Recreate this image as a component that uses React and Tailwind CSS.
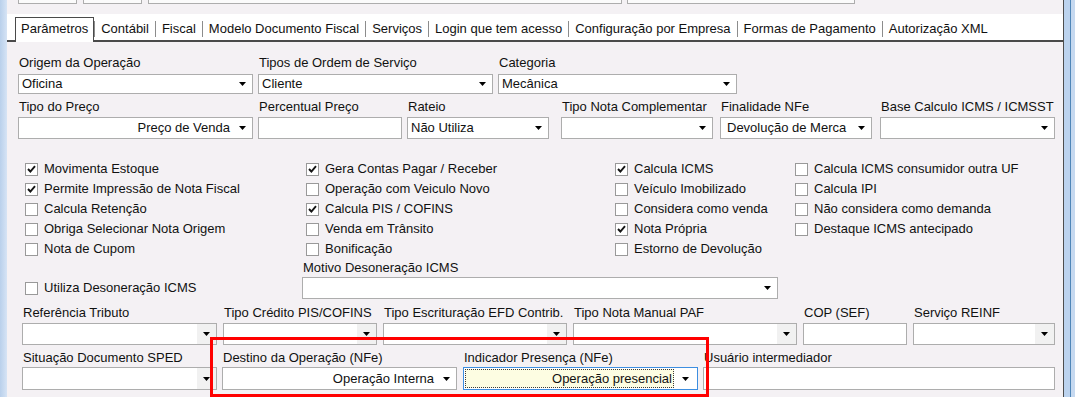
import React from 'react';

function Arrow() {
    return (
        <svg width="7" height="4" viewBox="0 0 7 4" className="block">
            <path d="M0 0H7L3.5 4Z" fill="#000" />
        </svg>
    );
}

function Tick() {
    return (
        <svg width="9" height="8" viewBox="0 0 9 8" className="block">
            <path d="M1 4l2.4 2.5L8 1.2" fill="none" stroke="#151515" strokeWidth="1.9" />
        </svg>
    );
}

function Check({ label, checked = false }) {
    return (
        <div className="flex h-[20px] items-center whitespace-nowrap">
            <span className="flex h-[13px] w-[13px] shrink-0 items-center justify-center border border-[#999] bg-white">
                {checked ? <Tick /> : null}
            </span>
            <span className="ml-[6px]">{label}</span>
        </div>
    );
}

function Field({ label, className = '', boxClass = 'mt-[2px] h-[22px]', value = '', combo = true, right = false, pad = 'pl-[3px]', shade = false }) {
    return (
        <div className={`shrink-0 ${className}`}>
            <div className="h-[16px] whitespace-nowrap pl-[1px] leading-[16px]">{label}</div>
            <div className={`flex border border-[#adadad] bg-white ${boxClass}`}>
                <div className={`flex min-w-0 flex-1 items-center overflow-hidden whitespace-nowrap ${right ? 'justify-end pr-[3px]' : pad}`}>
                    {value}
                </div>
                {combo ? (
                    <div className={`flex w-[19px] shrink-0 items-center justify-center ${shade ? 'bg-[#f1f1f1]' : ''}`}>
                        <Arrow />
                    </div>
                ) : null}
            </div>
        </div>
    );
}

const col1 = [
    ['Movimenta Estoque', true],
    ['Permite Impressão de Nota Fiscal', true],
    ['Calcula Retenção', false],
    ['Obriga Selecionar Nota Origem', false],
    ['Nota de Cupom', false],
];
const col2 = [
    ['Gera Contas Pagar / Receber', true],
    ['Operação com Veiculo Novo', false],
    ['Calcula PIS / COFINS', true],
    ['Venda em Trânsito', false],
    ['Bonificação', false],
];
const col3 = [
    ['Calcula ICMS', true],
    ['Veículo Imobilizado', false],
    ['Considera como venda', false],
    ['Nota Própria', true],
    ['Estorno de Devolução', false],
];
const col4 = [
    ['Calcula ICMS consumidor outra UF', false],
    ['Calcula IPI', false],
    ['Não considera como demanda', false],
    ['Destaque ICMS antecipado', false],
];

const tabs = ['Contábil', 'Fiscal', 'Modelo Documento Fiscal', 'Serviços', 'Login que tem acesso', 'Configuração por Empresa', 'Formas de Pagamento', 'Autorização XML'];

export default function App() {
    return (
        <div className="relative flex h-[397px] w-[1075px] overflow-hidden bg-[#f4f1f4] font-['Liberation_Sans',Arial,sans-serif] text-[13px] leading-[16px] text-[#111]">
            <div className="w-[7px] shrink-0 bg-gradient-to-r from-[#b9d0eb] to-[#d6e4f5]" />

            <div className="flex w-[1056px] shrink-0 flex-col">
                {/* toolbar edge */}
                <div className="flex h-[14px] items-start pl-[11px]">
                    <div className="h-[4px] w-[59px] border-x border-b border-[#adadad] bg-[#fbfbfb]" />
                    <div className="ml-[6px] h-[4px] w-[59px] border-x border-b border-[#adadad] bg-[#fbfbfb]" />
                    <div className="ml-[6px] h-[4px] w-[474px] border-x border-b border-[#adadad] bg-[#fbfbfb]" />
                    <div className="ml-[5px] h-[4px] w-[228px] border-x border-b border-[#adadad] bg-[#fbfbfb]" />
                </div>

                {/* tabs */}
                <div className="flex h-[28px] items-end bg-white">
                    <div className="w-[8px] self-stretch border-b-2 border-[#4a4a4a]" />
                    <div className="h-[25px] border-x border-t border-[#4a4a4a] px-[5px] pt-[3px] whitespace-nowrap">Parâmetros</div>
                    <div className="flex flex-1 items-center self-stretch border-b-2 border-[#4a4a4a] pt-[4px]">
                        {tabs.map((t) => (
                            <React.Fragment key={t}>
                                <span className="h-[16px] w-px bg-[#8c8c8c]" />
                                <span className="whitespace-nowrap px-[6px]">{t}</span>
                            </React.Fragment>
                        ))}
                    </div>
                </div>

                {/* row 1 */}
                <div className="mt-[13px] flex pl-[11px]">
                    <Field className="w-[235px]" boxClass="mt-[3px] h-[20px]" label="Origem da Operação" value="Oficina" />
                    <Field className="ml-[5px] w-[235px]" boxClass="mt-[3px] h-[20px]" label="Tipos de Ordem de Serviço" value="Cliente" />
                    <Field className="ml-[5px] w-[239px]" boxClass="mt-[3px] h-[20px]" label="Categoria" value="Mecânica" />
                </div>

                {/* row 2 */}
                <div className="mt-[5px] flex pl-[11px]">
                    <Field className="w-[235px]" label="Tipo do Preço" value="Preço de Venda" right />
                    <Field className="ml-[5px] w-[144px]" label="Percentual Preço" combo={false} />
                    <Field className="ml-[5px] w-[142px]" label="Rateio" value="Não Utiliza" />
                    <Field className="ml-[12px] w-[152px]" label="Tipo Nota Complementar" />
                    <Field className="ml-[7px] w-[152px]" label="Finalidade NFe" value="Devolução de Merca" pad="pl-[6px]" />
                    <Field className="ml-[8px] w-[175px]" label="Base Calculo ICMS / ICMSST" />
                </div>

                {/* checkboxes */}
                <div className="mt-[20px] flex pl-[18px]">
                    <div className="w-[281px]">
                        {col1.map(([l, c]) => <Check key={l} label={l} checked={c} />)}
                    </div>
                    <div className="w-[309px]">
                        {col2.map(([l, c]) => <Check key={l} label={l} checked={c} />)}
                    </div>
                    <div className="w-[180px]">
                        {col3.map(([l, c]) => <Check key={l} label={l} checked={c} />)}
                    </div>
                    <div>
                        {col4.map(([l, c]) => <Check key={l} label={l} checked={c} />)}
                    </div>
                </div>

                <div className="mt-[1px] flex items-end pl-[18px]">
                    <div className="flex h-[22px] w-[277px] items-center">
                        <Check label="Utiliza Desoneração ICMS" />
                    </div>
                    <Field className="w-[476px]" boxClass="mt-[1px] h-[22px]" label="Motivo Desoneração ICMS" />
                </div>

                {/* row 3 */}
                <div className="mt-[6px] flex pl-[15px]">
                    <Field className="w-[195px]" label="Referência Tributo" shade />
                    <Field className="ml-[6px] w-[154px]" label="Tipo Crédito PIS/COFINS" shade />
                    <Field className="ml-[6px] w-[184px]" label="Tipo Escrituração EFD Contrib." shade />
                    <Field className="ml-[6px] w-[224px]" label="Tipo Nota Manual PAF" shade />
                    <Field className="ml-[6px] w-[104px]" label="COP (SEF)" combo={false} />
                    <Field className="ml-[6px] w-[142px]" label="Serviço REINF" shade />
                </div>

                {/* row 4 */}
                <div className="mt-[5px] flex pl-[15px]">
                    <Field className="w-[195px]" boxClass="mt-[1px] h-[23px]" label="Situação Documento SPED" shade />
                    <Field className="ml-[5px] w-[235px]" boxClass="mt-[1px] h-[23px]" label="Destino da Operação (NFe)" value="Operação Interna" right />
                    <div className="ml-[6px] w-[235px] shrink-0">
                        <div className="h-[16px] whitespace-nowrap pl-[1px]">Indicador Presença (NFe)</div>
                        <div className="mt-[1px] flex h-[23px] border border-[#3d8ee0] bg-white p-[1px]">
                            <div className="flex flex-1 items-center justify-end overflow-hidden whitespace-nowrap border border-dotted border-[#3a3a3a] bg-[#fdfde2] pr-[1px]">
                                Operação presencial
                            </div>
                            <div className="flex w-[22px] items-center justify-center">
                                <Arrow />
                            </div>
                        </div>
                    </div>
                    <Field className="ml-[5px] w-[352px]" boxClass="mt-[1px] h-[23px]" label="Usuário intermediador" combo={false} />
                </div>
            </div>

            <div className="flex w-[12px] shrink-0">
                <div className="w-px bg-[#4d4d4d]" />
                <div className="w-[6px] bg-[#bcd3ee]" />
                <div className="w-px bg-[#4f86b8]" />
                <div className="flex-1 bg-[#c6d9f0]" />
            </div>

            {/* highlight */}
            <div className="absolute left-[210px] top-[337px] h-[60px] w-[499px] border-[3px] border-[#ff0000]" />
        </div>
    );
}
